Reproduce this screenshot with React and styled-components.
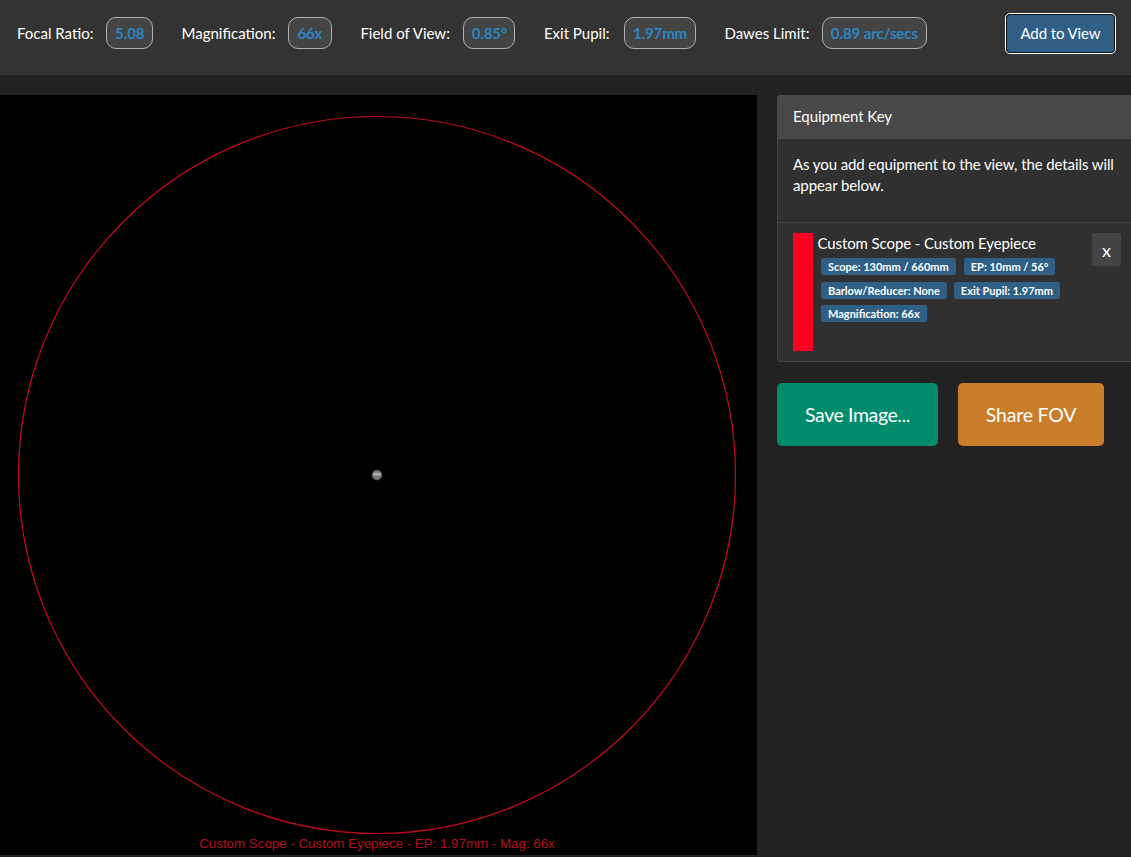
import styled, { createGlobalStyle } from "styled-components";

const GlobalStyle = createGlobalStyle`
  html, body {
    margin: 0;
    padding: 0;
    background: #222;
    height: 100%;
  }
  body {
    font-family: Lato, "Open Sans", sans-serif;
    color: #fff;
    overflow: hidden;
  }
`;

const stats = [
  { label: "Focal Ratio:", value: "5.08", width: 46.5, gap: 13 },
  { label: "Magnification:", value: "66x", width: 44, gap: 12.5 },
  { label: "Field of View:", value: "0.85°", width: 52, gap: 13.5 },
  { label: "Exit Pupil:", value: "1.97mm", width: 72, gap: 14.5 },
  { label: "Dawes Limit:", value: "0.89 arc/secs", width: 105, gap: 12.5 },
];

const tags = [
  { text: "Scope: 130mm / 660mm", gap: 8 },
  { text: "EP: 10mm / 56°", gap: 0 },
  { text: "Barlow/Reducer: None", gap: 7 },
  { text: "Exit Pupil: 1.97mm", gap: 0 },
  { text: "Magnification: 66x", gap: 0 },
];

export default function App() {
  return (
    <Page>
      <GlobalStyle />
      <TopBar>
        <Stats>
          {stats.map((s) => (
            <Stat key={s.label} $gap={s.gap}>
              <StatLabel>{s.label}</StatLabel>
              <StatValue $width={s.width}>{s.value}</StatValue>
            </Stat>
          ))}
        </Stats>
        <AddButton>Add to View</AddButton>
      </TopBar>
      <Main>
        <Viewer>
          <FovSvg viewBox="0 0 757 760" width="757" height="760">
            <defs>
              <radialGradient id="planet">
                <stop offset="0%" stopColor="#9a9a9a" />
                <stop offset="65%" stopColor="#858585" />
                <stop offset="100%" stopColor="#2a2a2a" />
              </radialGradient>
            </defs>
            <circle cx="377" cy="380" r="358.5" fill="none" stroke="#c20a1c" strokeWidth="1.2" />
            <circle cx="377" cy="380" r="5.5" fill="url(#planet)" />
            <rect x="373" y="378.5" width="8" height="1.5" fill="#b5b5b5" />
            <rect x="373" y="381.5" width="8" height="1" fill="#6f6f6f" />
            <Caption x="377" y="753" textAnchor="middle">
              Custom Scope - Custom Eyepiece - EP: 1.97mm - Mag: 66x
            </Caption>
          </FovSvg>
        </Viewer>
        <Side>
          <KeyCard>
            <KeyHeader>Equipment Key</KeyHeader>
            <KeyIntro>
              As you add equipment to the view, the details will appear below.
            </KeyIntro>
            <KeyItem>
              <Swatch />
              <ItemBody>
                <ItemTitle>Custom Scope - Custom Eyepiece</ItemTitle>
                <Tags>
                  {tags.map((t) => (
                    <Tag key={t.text} $gap={t.gap}>
                      {t.text}
                    </Tag>
                  ))}
                </Tags>
              </ItemBody>
              <RemoveButton>x</RemoveButton>
            </KeyItem>
          </KeyCard>
          <Actions>
            <ActionButton $bg="#008c6c" $width={161} $spacing={-0.4}>
              Save Image...
            </ActionButton>
            <ActionButton $bg="#c97c2a" $width={146} $spacing={-0.2}>
              Share FOV
            </ActionButton>
          </Actions>
        </Side>
      </Main>
    </Page>
  );
}

const Page = styled.div`
  width: 1131px;
  height: 857px;
  overflow: hidden;
  background: #222;
`;

const TopBar = styled.div`
  display: flex;
  align-items: flex-start;
  justify-content: space-between;
  height: 75px;
  box-sizing: border-box;
  padding: 13px 15px 0 17px;
  background: #333;
`;

const Stats = styled.div`
  display: flex;
  align-items: center;
  gap: 28.5px;
  height: 40px;
`;

const Stat = styled.div`
  display: flex;
  align-items: center;
  gap: ${(p) => p.$gap}px;
`;

const StatLabel = styled.span`
  font-size: 15px;
  color: #fff;
`;

const StatValue = styled.span`
  display: flex;
  align-items: center;
  justify-content: center;
  box-sizing: border-box;
  width: ${(p) => p.$width}px;
  height: 32px;
  border: 1px solid #b0b0b0;
  border-radius: 10px;
  background: #444;
  color: #2a85c2;
  font-size: 15px;
  font-weight: 700;
  letter-spacing: -0.1px;
`;

const AddButton = styled.button`
  box-sizing: border-box;
  width: 111px;
  height: 41px;
  padding: 0 0 2px;
  border: 1px solid #fff;
  outline: 1px solid #111;
  outline-offset: -2px;
  border-radius: 5px;
  background: #2f5f85;
  color: #fff;
  font-family: inherit;
  font-size: 15px;
  letter-spacing: -0.1px;
`;

const Main = styled.div`
  display: flex;
  gap: 20px;
  padding-top: 20px;
`;

const Viewer = styled.div`
  flex: none;
  width: 757px;
  height: 760px;
  background: #000;
`;

const FovSvg = styled.svg`
  display: block;
`;

const Caption = styled.text`
  font-family: "Liberation Sans", Arial, sans-serif;
  font-size: 13.33px;
  fill: #b50d1c;
`;

const Side = styled.div`
  flex: 1;
  min-width: 0;
`;

const KeyCard = styled.div`
  box-sizing: border-box;
  height: 267px;
  border: 1px solid #444;
  border-right: none;
  border-radius: 4px 0 0 4px;
  background: #303030;
`;

const KeyHeader = styled.div`
  box-sizing: border-box;
  height: 44px;
  margin: -1px 0 0 -1px;
  padding: 0 0 2px 16px;
  display: flex;
  align-items: center;
  background: #484848;
  border-radius: 4px 0 0 0;
  font-size: 15px;
  letter-spacing: -0.05px;
`;

const KeyIntro = styled.div`
  box-sizing: border-box;
  height: 84px;
  padding: 15px 15px 0 15px;
  border-bottom: 1px solid #444;
  font-size: 15px;
  line-height: 21px;
  letter-spacing: -0.1px;
`;

const KeyItem = styled.div`
  display: flex;
  padding: 10px 10px 0 15px;
`;

const Swatch = styled.div`
  flex: none;
  width: 20px;
  height: 118px;
  background: #ff0022;
`;

const ItemBody = styled.div`
  flex: 1;
  min-width: 0;
  padding-left: 4.5px;
`;

const ItemTitle = styled.div`
  font-size: 15px;
  line-height: 21px;
  letter-spacing: -0.1px;
`;

const Tags = styled.div`
  display: flex;
  flex-wrap: wrap;
  align-items: flex-start;
  row-gap: 6.5px;
  padding: 4px 0 0 3.5px;
  width: 250px;
`;

const Tag = styled.span`
  display: block;
  height: 17px;
  line-height: 17px;
  padding: 0 7px;
  margin-right: ${(p) => p.$gap}px;
  border-radius: 2px;
  background: #2f5f85;
  color: #fff;
  font-size: 11px;
  font-weight: 700;
  white-space: nowrap;
`;

const RemoveButton = styled.button`
  flex: none;
  width: 29px;
  height: 33px;
  padding: 0;
  border: none;
  border-radius: 3px;
  background: #444;
  color: #fff;
  font-family: inherit;
  font-size: 18px;
`;

const Actions = styled.div`
  display: flex;
  gap: 20px;
  margin-top: 21px;
`;

const ActionButton = styled.button`
  box-sizing: border-box;
  width: ${(p) => p.$width}px;
  height: 63px;
  padding: 0;
  border: none;
  border-radius: 5px;
  background: ${(p) => p.$bg};
  color: #fff;
  font-family: inherit;
  font-size: 19.5px;
  letter-spacing: ${(p) => p.$spacing}px;
`;
